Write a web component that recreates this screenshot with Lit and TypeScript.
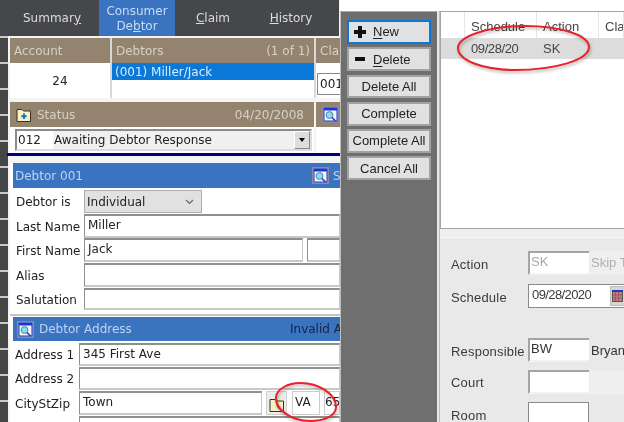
import { LitElement, html, css, svg } from "lit";
import { customElement } from "lit/decorators.js";

const searchIcon = () => html`<svg class="ico" viewBox="0 0 17 17" width="17" height="17">
  <rect x="0.5" y="0.5" width="16" height="16" fill="#a3a3a8" stroke="#8c8c90"/>
  <rect x="2" y="2" width="13" height="13" fill="#f4f6fb" stroke="#1c35d8"/>
  <rect x="2" y="2" width="13" height="2.5" fill="#1c35d8"/>
  <circle cx="7.5" cy="9" r="3.4" fill="#7fe2ee" stroke="#5a7f9a"/>
  <path d="M10 11.5 L13.5 15" stroke="#2a33c8" stroke-width="1.6"/>
</svg>`;

const folderIcon = (plus = true) => html`<svg class="ico" viewBox="0 0 16 16" width="16" height="16">
  <path d="M1 14.5 V2.5 H6 L7.5 4 H14.5 V14.5 Z" fill="#fbefc4" stroke="#3a3226"/>
  ${plus ? svg`<path d="M8 6.5 V12 M5.3 9.2 H10.7" stroke="#1276c8" stroke-width="2"/>` : svg`<path d="M8 8 L11 12" stroke="#1a4fb0" stroke-width="2"/>`}
</svg>`;

@customElement("app-root")
export class AppRoot extends LitElement {
  static styles = css`
    :host { display: block; width: 624px; height: 422px; overflow: hidden; position: relative; background: #fff; }
    * { box-sizing: border-box; }
    .ico { flex: none; display: block; }
    .page { display: flex; width: 624px; height: 422px; filter: blur(0.35px); }
    .left { width: 340px; height: 422px; display: flex; flex-direction: column; font: 12px/1 "DejaVu Sans", sans-serif; color: #222; background: #f4f4f4; overflow: hidden; flex: none; }
    .nav { height: 36px; flex: none; background: #46474b; display: flex; color: #dcdcdc; font-size: 12px; margin-right: 1px; }
    .tab { display: flex; align-items: center; justify-content: center; text-align: center; line-height: 15px; flex: none; }
    .tab.t1 { width: 99px; padding-left: 5px; }
    .tab.t2 { width: 76px; background: #3a74c0; color: #c8dcf4; padding-top: 1px; }
    .tab.t3 { width: 76px; }
    .tab.t4 { width: 80px; }
    .body { flex: 1; display: flex; min-height: 0; }
    .strip { width: 8px; flex: none; display: flex; flex-direction: column; gap: 2px; padding-top: 2px; background: #c9c9c9; }
    .strip i { display: block; height: 24px; flex: none; background: #454545; }
    .content { flex: 1; min-width: 0; display: flex; flex-direction: column; padding-top: 2px; }
    .row-a { display: grid; grid-template-columns: 100px 202px 1fr; column-gap: 2px; margin-left: 2px; height: 60px; background: #d8d8d8; }
    .row-b { display: grid; grid-template-columns: 304px 1fr; column-gap: 2px; margin-left: 2px; margin-top: 4px; height: 51px; }
    .cell { background: #fff; display: flex; flex-direction: column; min-width: 0; overflow: hidden; }
    .head { height: 25px; flex: none; background: #94846f; color: #d6d0c6; display: flex; align-items: center; padding: 0 4px; justify-content: space-between; white-space: nowrap; }
    .acct { flex: 1; display: flex; align-items: center; justify-content: center; }
    .sel { height: 17px; background: #0a78d6; color: #d8ecff; display: flex; align-items: center; padding: 0 3px; }
    .mini { margin: 10px 0 0 1px; height: 22px; width: 40px; border: 1px solid #888; border-right: 0; background: #fff; padding: 4px 2px; }
    .status-head { padding: 0 10px 0 6px; }
    .status-head .l { display: flex; align-items: center; gap: 5px; }
    .status-sel { margin: 2px 2px 0 5px; height: 22px; display: flex; border: 2px solid #8b8b8b; border-right-color: #ddd; border-bottom-color: #ddd; background: #f0f0f0; align-items: center; }
    .status-sel .c { width: 36px; height: 100%; background: #fff; display: flex; align-items: center; padding-left: 1px; flex: none; }
    .status-sel .t { flex: 1; padding-left: 1px; white-space: nowrap; }
    .drop { width: 16px; height: 100%; background: #ddd; border: 1px solid #fff; border-right-color: #888; border-bottom-color: #888; display: flex; align-items: center; justify-content: center; flex: none; }
    .drop::after { content: ""; border: 3.5px solid transparent; border-top: 4px solid #000; border-bottom: 0; }
    .icon-head { padding: 0 0 0 6px; justify-content: flex-start; }
    .navy { height: 3px; flex: none; background: #00007c; margin-left: -1px; }
    .after-navy { height: 7px; flex: none; }
    .form { flex: 1; background: #fff; margin-left: 2px; padding-left: 3px; display: flex; flex-direction: column; min-height: 0; }
    .blue { height: 25px; flex: none; background: #3a74c0; color: #bdd4f0; display: flex; align-items: center; white-space: nowrap; overflow: hidden; }
    .blue.addr { height: 24px; }
    .blue .ttl { flex: 1; padding-left: 2px; }
    .blue .r1 { width: 28px; display: flex; gap: 4px; align-items: center; flex: none; overflow: hidden; }
    .blue .aicon { display: flex; padding: 0 3px 0 4px; }
    .blue .attl { flex: none; width: 253px; }
    .blue .warn { color: #16243c; }
    .frow { display: flex; align-items: center; white-space: nowrap; flex: none; height: 24px; }
    .frow label { flex: none; padding: 1px 0 0 3px; width: 71px; }
    .short label { width: 66px; padding-left: 2px; }
    .row-combo { height: 25px; padding-top: 2px; }
    .m1 { margin-top: 1px; }
    .m2 { margin-top: 2px; }
    .h22 { height: 22px; }
    .h23 { height: 23px; }
    .in { flex: 1; min-width: 0; height: 100%; background: #fff; border: 1px solid #8f8f8f; border-top-width: 2px; border-bottom: 2px solid #c8c8c8; border-right-color: #c8c8c8; padding: 3px 3px 0; white-space: nowrap; overflow: hidden; }
    .combo { width: 118px; height: 23px; background: #e1e1e1; border: 1px solid #adadad; display: flex; align-items: center; justify-content: space-between; padding: 0 7px 0 2px; }
    .combo svg { display: block; }
    .w219 { flex: none; width: 219px; }
    .tail { flex: 1; margin-left: 4px; }
    .sep { height: 2px; background: #c4c4c4; margin: 4px 0 1px -3px; flex: none; }
    .w183 { flex: none; width: 183px; }
    .pick { width: 21px; height: 100%; margin-left: 4px; background: #ececec; border: 1px solid #d0d0d0; display: flex; align-items: flex-end; justify-content: center; padding-bottom: 1px; flex: none; }
    .w28 { flex: none; width: 28px; margin-left: 5px; border-color: #ccc; border-width: 1px; padding: 4px 0 0 2px; }
    .zip { flex: 1; margin-left: 4px; border-color: #ccc; border-width: 1px; padding: 4px 0 0; }

    .right { flex: 1; min-width: 0; display: flex; flex-direction: column; font: 13px/1 "Liberation Sans", sans-serif; color: #333; background: #fff; }
    .top-gap { height: 11px; flex: none; }
    .work { flex: 1; display: flex; min-height: 0; }
    .side { width: 97px; flex: none; background: #6f6f6f; padding: 8px 6px 0 6px; display: flex; flex-direction: column; gap: 3.6px; border-left: 1px solid #bdbdbd; border-top: 1px solid #a9a9a9; }
    .btn { height: 23.7px; flex: none; background: #e1e1e1; border: 2px solid #a2a2a2; color: #222; display: flex; align-items: center; justify-content: center; gap: 6px; white-space: nowrap; }
    .btn.focus { border-color: #0a78d6; }
    .btn.ic { justify-content: flex-start; padding-left: 4px; }
    .btn u { text-underline-offset: 2px; }
    .rail { width: 3px; flex: none; background: #e8e8e8; border-right: 1px solid #bcbcbc; }
    .col { flex: 1; min-width: 0; display: flex; flex-direction: column; background: #eee; }
    .list { height: 218px; flex: none; background: #fff; border: 1px solid #a5a5a5; border-width: 1px 0 1px 1px; display: flex; flex-direction: column; white-space: nowrap; overflow: hidden; }
    .lhead, .lrow { display: grid; grid-template-columns: 24px 72px 62px 1fr; }
    .lhead { height: 26px; flex: none; color: #444; }
    .lhead span { border-right: 1px solid #e6e6e6; padding: 8px 0 0 6px; overflow: hidden; }
    .lrow { height: 21px; flex: none; background: #dcdcdc; align-items: center; color: #444; }
    .lrow span { padding-left: 6px; }
    .lrow .d { letter-spacing: -0.4px; }
    .detail { margin-top: 8px; flex: 1; background: #e9e9e9; border-top: 1px solid #f7f7f7; padding: 13px 0 0 11px; display: flex; flex-direction: column; overflow: hidden; white-space: nowrap; color: #3a3a3a; }
    .drow { display: flex; align-items: center; flex: none; height: 24px; }
    .drow label { width: 77px; flex: none; padding-top: 3px; letter-spacing: .2px; }
    .drow label.up { padding-top: 1px; }
    .box { width: 61px; height: 100%; flex: none; background: #fff; border: 2px solid #a4a4a4; border-right: 0; border-bottom-color: #f2f2f2; padding: 2px 0 0 1px; color: #333; }
    .box.dim { color: #a8a8a8; }
    .after { flex: 1; padding-left: 2px; color: #333; }
    .after.dim { color: #b0b0b0; background: #efefef; height: 100%; padding: 5px 0 0 1px; margin-left: 1px; }
    .sched { width: 82px; height: 100%; flex: none; background: #fff; border: 1px solid #8a8a8a; border-right: 0; padding: 3px 0 0 3px; letter-spacing: -0.6px; }
    .cal { flex: 1; height: 100%; background: #fff; border-top: 1px solid #8a8a8a; border-bottom: 1px solid #8a8a8a; display: flex; align-items: center; }
    .cal b { display: flex; align-items: center; justify-content: center; height: 20px; width: 15px; background: #d6d6d6; border: 1px solid #bbb; }
    .cal svg { display: block; }
    .g9 { margin-top: 9px; } .g30 { margin-top: 30px; } .g8 { margin-top: 8px; }
    .court { flex: 1; height: 100%; background: #efefef; margin-left: 1px; }
    .room { width: 61px; height: 100%; flex: none; background: #fff; border: 1px solid #8a8a8a; }

    .ink { position: absolute; left: 0; top: 0; pointer-events: none; }
  `;

  render() {
    const tabs = Array.from({ length: 15 });
    return html`
      <div class="page">
        <div class="left">
          <div class="nav">
            <div class="tab t1"><span>Summar<u>y</u></span></div>
            <div class="tab t2"><span>Consumer<br />De<u>b</u>tor</span></div>
            <div class="tab t3"><span><u>C</u>laim</span></div>
            <div class="tab t4"><span><u>H</u>istory</span></div>
          </div>
          <div class="body">
            <div class="strip">${tabs.map(() => html`<i></i>`)}</div>
            <div class="content">
              <div class="row-a">
                <div class="cell"><div class="head">Account</div><div class="acct">24</div></div>
                <div class="cell"><div class="head"><span>Debtors</span><span>(1 of 1)</span></div><div class="sel">(001) Miller/Jack</div></div>
                <div class="cell"><div class="head">Cla</div><div class="mini">001</div></div>
              </div>
              <div class="row-b">
                <div class="cell">
                  <div class="head status-head"><span class="l">${folderIcon()}Status</span><span>04/20/2008</span></div>
                  <div class="status-sel"><span class="c">012</span><span class="t">Awaiting Debtor Response</span><span class="drop"></span></div>
                </div>
                <div class="cell"><div class="head icon-head">${searchIcon()}</div></div>
              </div>
              <div class="navy"></div>
              <div class="after-navy"></div>
              <div class="form">
                <div class="blue"><span class="ttl">Debtor 001</span><span class="r1">${searchIcon()}<span>S</span></span></div>
                <div class="frow row-combo">
                  <label>Debtor is</label>
                  <div class="combo"><span>Individual</span><svg width="9" height="6" viewBox="0 0 9 6"><path d="M1 1 L4.5 4.5 L8 1" fill="none" stroke="#666" stroke-width="1.2"/></svg></div>
                </div>
                <div class="frow m1"><label>Last Name</label><div class="in">Miller</div></div>
                <div class="frow"><label>First Name</label><div class="in w219">Jack</div><div class="in tail"></div></div>
                <div class="frow m1"><label>Alias</label><div class="in"></div></div>
                <div class="frow m1 h22"><label>Salutation</label><div class="in"></div></div>
                <div class="sep"></div>
                <div class="blue addr"><span class="aicon">${searchIcon()}</span><span class="ttl attl">Debtor Address</span><span class="warn">Invalid A</span></div>
                <div class="frow short m2 h23"><label>Address 1</label><div class="in">345 First Ave</div></div>
                <div class="frow short m1 h23"><label>Address 2</label><div class="in"></div></div>
                <div class="frow short m1"><label>CityStZip</label><div class="in w183">Town</div><div class="pick">${folderIcon(false)}</div><div class="in w28">VA</div><div class="in zip">65</div></div>
                <div class="frow short m1 h22"><label></label><div class="in"></div></div>
              </div>
            </div>
          </div>
        </div>
        <div class="right">
          <div class="top-gap"></div>
          <div class="work">
            <div class="side">
              <div class="btn focus ic"><svg class="ico" width="14" height="14" viewBox="0 0 14 14"><path d="M5 1 H9 V5 H13 V9 H9 V13 H5 V9 H1 V5 H5 Z" fill="#111"/></svg><span><u>N</u>ew</span></div>
              <div class="btn ic"><svg class="ico" width="14" height="14" viewBox="0 0 14 14"><rect x="2" y="5" width="10" height="4" fill="#111"/></svg><span><u>D</u>elete</span></div>
              <div class="btn">Delete All</div>
              <div class="btn">Complete</div>
              <div class="btn">Complete All</div>
              <div class="btn">Cancel All</div>
            </div>
            <div class="rail"></div>
            <div class="col">
              <div class="list">
                <div class="lhead"><span></span><span>Schedule</span><span>Action</span><span>Cla</span></div>
                <div class="lrow"><span></span><span class="d">09/28/20</span><span>SK</span><span></span></div>
              </div>
              <div class="detail">
                <div class="drow"><label>Action</label><div class="box dim">SK</div><div class="after dim">Skip T</div></div>
                <div class="drow g9"><label>Schedule</label><div class="sched">09/28/2020</div>
                  <div class="cal"><b><svg width="11" height="12" viewBox="0 0 11 12"><rect x="0.5" y="0.5" width="10" height="11" fill="#c9787a" stroke="#555"/><rect x="0" y="0" width="11" height="2" fill="#2438c8"/><path d="M3.5 2 V11 M6.5 2 V11 M1 5 H10 M1 8 H10" stroke="#7a5a60" stroke-width=".7"/></svg></b></div></div>
                <div class="drow g30"><label>Responsible</label><div class="box">BW</div><div class="after">Bryan</div></div>
                <div class="drow g8"><label class="up">Court</label><div class="box"></div><div class="court"></div></div>
                <div class="drow g8"><label>Room</label><div class="room"></div></div>
              </div>
            </div>
          </div>
        </div>
      </div>
      <svg class="ink" width="624" height="422" viewBox="0 0 624 422">
        <defs><filter id="sh" x="-10%" y="-20%" width="120%" height="150%"><feDropShadow dx="1" dy="2" stdDeviation="1.5" flood-color="#000" flood-opacity=".3"/></filter></defs>
        <path d="M458 48 C458 36 490 26 525 26 C560 26 589 35 589 47 C589 60 555 70 515 70 C482 70 458 60 458 48 Z" fill="none" stroke="#e8202a" stroke-width="2" filter="url(#sh)"/>
        <path d="M276 397 C277 389 288 383 300 383 C319 383 336 394 336 407 C336 416 324 421 310 421 C292 421 275 410 276 397 Z" fill="none" stroke="#e8202a" stroke-width="2" filter="url(#sh)"/>
      </svg>
    `;
  }
}
